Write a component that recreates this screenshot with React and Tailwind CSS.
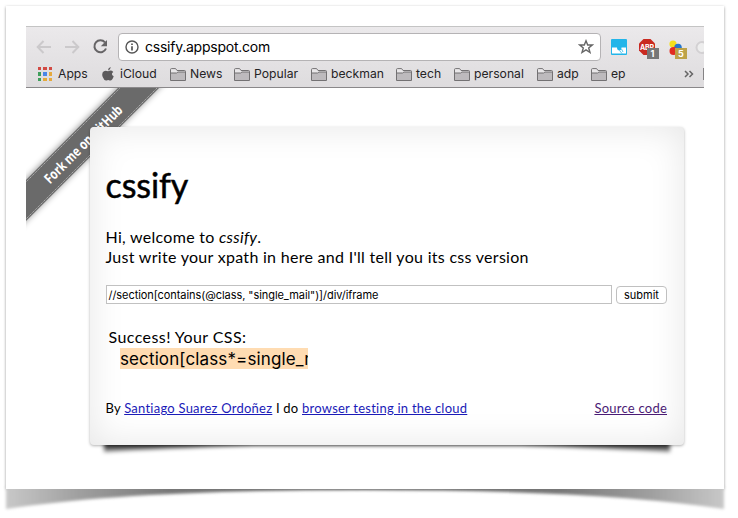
import React from 'react';

const Folder = () => (
  <svg width="16" height="13" viewBox="0 0 16 13" className="mr-[4px] shrink-0">
    <path d="M.5 12.500V1.600Q.5.6 1.500.6H5.600L7 2.500H14.600Q15.500 2.500 15.500 3.500V12.500Z" fill="#e9e7e9" stroke="#737173" />
    <path d="M1 5H7L8.200 4H15V12H1Z" fill="#bdbabd" />
    <path d="M.5 5H6.500L8 4H15.500" fill="none" stroke="#737173" />
  </svg>
);

const folders = [
  { name: 'News', box: 'w-[64px]' },
  { name: 'Popular', box: 'w-[77px]' },
  { name: 'beckman', box: 'w-[85px]' },
  { name: 'tech', box: 'w-[58px]' },
  { name: 'personal', box: 'w-[83px]' },
  { name: 'adp', box: 'w-[54px]' },
  { name: 'ep', box: 'w-[40px]' },
];

const appColors = ['#d24a43', '#d24a43', '#d24a43', '#3f9e5b', '#4a86e8', '#e5a93d', '#3f9e5b', '#e5a93d', '#e5a93d'];

function Toolbar() {
  return (
    <div className="h-[36px] flex items-center pt-[3px]">
      <svg width="82" height="20" viewBox="0 0 82 20" className="ml-[10px] shrink-0" fill="none">
        <path d="M15 10H2M7.500 4L1.700 10L7.500 16" stroke="#cbc9cb" strokeWidth="2" />
        <path d="M29 10H42M36.500 4L42.300 10L36.500 16" stroke="#cbc9cb" strokeWidth="2" />
        <path d="M69 5.400A6 6 0 1 0 70 11.500" stroke="#666466" strokeWidth="2" />
        <path d="M71 3V9.200H64.800Z" fill="#666466" />
      </svg>
      <div className="w-[483px] h-[28px] shrink-0 bg-white border border-[#b5b3b5] rounded-[4px] flex items-center">
        <svg width="14" height="14" viewBox="0 0 14 14" className="ml-[6px] mr-[6px]">
          <circle cx="7" cy="7" r="6" fill="none" stroke="#555" strokeWidth="1.400" />
          <path d="M7 6.200V10.500M7 3.400V5" stroke="#555" strokeWidth="1.700" />
        </svg>
        <span className="text-[14px] leading-[20px] tracking-[-0.24px] text-black whitespace-nowrap">cssify.appspot.com</span>
        <svg width="16" height="16" viewBox="0 0 16 16" className="ml-auto mr-[6px]">
          <path d="M8 1.800L9.700 6H14.200L10.700 8.900L12 13.500L8 10.900L4 13.500L5.300 8.900L1.800 6H6.300Z" fill="none" stroke="#666" strokeWidth="1.400" />
        </svg>
      </div>
      <svg width="103" height="28" viewBox="601 32 103 28" className="shrink-0">
        <rect x="611" y="38" width="16" height="16" rx="1" fill="#22b5e9" />
        <path d="M612 46.500H617Q617 49.500 619.500 49.500Q621.500 49.500 621.500 46.500H626V52.500H612Z" fill="#fff" />
        <path d="M619.500 49.500L622 52.500M621.500 48L623 51" stroke="#22b5e9" strokeWidth=".8" />
        <path d="M643.500 38H650.500L655 42.500V49.500L650.500 54H643.500L639 49.500V42.500Z" fill="#c92a20" />
        <text x="640" y="48.500" fontSize="7" fontWeight="700" fill="#fff" textLength="14">ABP</text>
        <rect x="647" y="47" width="12" height="11" fill="#777" />
        <text x="650.500" y="56" fontSize="9" fontWeight="700" fill="#fff">1</text>
        <circle cx="673" cy="43" r="3.600" fill="#f4df1d" />
        <circle cx="678" cy="46.500" r="3.800" fill="#2577ce" />
        <circle cx="673.500" cy="50" r="4" fill="#e32c22" />
        <rect x="675" y="47" width="12" height="11" fill="#bda349" />
        <text x="678" y="56" fontSize="9" fontWeight="700" fill="#fff">5</text>
        <circle cx="702" cy="46.500" r="5.500" fill="#eeeeee" stroke="#d3d1d3" strokeWidth="2" />
      </svg>
    </div>
  );
}

function Bookmarks() {
  return (
    <div className="h-[24px] flex items-center text-[12.200px] leading-[20px] text-[#252325] pb-[2px]">
      <div className="ml-[12px] w-[64px] shrink-0 flex items-center">
        <div className="grid grid-cols-3 gap-[2px] mr-[6px]">
          {appColors.map((c, i) => (
            <div key={i} className="w-[3.330px] h-[3.330px]" style={{ backgroundColor: c }} />
          ))}
        </div>
        <span>Apps</span>
      </div>
      <div className="w-[68px] shrink-0 flex items-center">
        <svg width="12" height="14" viewBox="0 0 12 14" className="mr-[6px]" fill="#5c5a5c">
          <path d="M8.600.1Q8.800 2.600 6.100 3.400Q5.800 1.100 8.600.1ZM6.100 4.200Q9.300 2.700 11.300 5Q8.300 7.100 11.700 9.300Q9.800 14.500 7.800 13.400Q6.100 12.600 4.700 13.400Q2.400 14.200.7 10Q-.7 5.900 1.900 4.200Q3.500 3.200 6.100 4.200Z" />
        </svg>
        <span>iCloud</span>
      </div>
      {folders.map((f) => (
        <div key={f.name} className={`shrink-0 flex items-center ${f.box}`}>
          <Folder />
          <span>{f.name}</span>
        </div>
      ))}
      <svg width="10" height="8" viewBox="0 0 10 8" className="ml-auto mr-[9px] shrink-0" fill="none" stroke="#666" strokeWidth="1.500">
        <path d="M1 1L4 4L1 7M5.500 1L8.500 4L5.500 7" />
      </svg>
      <div className="w-[1px] h-[12px] bg-[#858385]" />
    </div>
  );
}

function Ribbon() {
  return (
    <svg className="absolute left-0 top-0" width="150" height="150" viewBox="26 88 150 150">
      <defs>
        <filter id="ribbonShadow" x="-20%" y="-20%" width="140%" height="140%">
          <feGaussianBlur stdDeviation="3" />
        </filter>
      </defs>
      <path d="M16 189L128 77H170L16 231Z" fill="#000" opacity=".4" filter="url(#ribbonShadow)" />
      <path d="M16 190L128 78H169L16 231Z" fill="#6a6a6a" />
      <path d="M16 192L128 80M16 229L169 76" stroke="#b4b4b4" strokeWidth=".9" strokeDasharray="1.500 .7" />
      <text x="0" y="0" transform="translate(50 184.500) rotate(-45)" fontFamily="Open Sans, sans-serif" fontSize="14" fontWeight="700" fill="#fff" textLength="104" lengthAdjust="spacingAndGlyphs">Fork me on GitHub</text>
    </svg>
  );
}

function Card() {
  return (
    <div className="relative ml-[64px] mt-[39px] w-[594px] h-[318px]">
      <svg className="absolute left-0 top-[303px]" width="594" height="35" viewBox="90 430 594 35">
        <defs>
          <linearGradient id="liftFade" gradientUnits="userSpaceOnUse" x1="0" x2="0" y1="444" y2="454">
            <stop offset="0" stopColor="#000" stopOpacity=".85" />
            <stop offset="1" stopColor="#000" stopOpacity=".3" />
          </linearGradient>
          <filter id="lift" x="-5%" y="-50%" width="110%" height="200%">
            <feGaussianBlur stdDeviation="2" />
          </filter>
        </defs>
        <path d="M104 436H670V452Q610 448 520 445H255Q160 448 104 452Z" fill="url(#liftFade)" filter="url(#lift)" />
      </svg>
      <div className="relative h-full rounded-[4px] bg-white pl-[15.500px] pr-[17px] text-black shadow-[0_1px_3px_rgba(0,0,0,0.3),inset_0_0_36px_rgba(0,0,0,0.1)] font-['Lato','Open_Sans',sans-serif]">
        <h1 className="pt-[36px] text-[34px] leading-[44px] tracking-[-0.1px] [-webkit-text-stroke:0.5px_black]">cssify</h1>
        <p className="pt-[20px] text-[16px] leading-[20px] whitespace-nowrap tracking-[0.290px]">
          Hi, welcome to <em>cssify</em>.<br />
          Just write your xpath in here and I'll tell you its css version
        </p>
        <div className="mt-[18px] flex items-center justify-between font-['Inter',sans-serif] text-[11px]">
          <div className="w-[506px] h-[19px] border border-[#c1c1c1] bg-white pl-[2px] leading-[18px] tracking-[-0.06px] whitespace-nowrap">//section[contains(@class, "single_mail")]/div/iframe</div>
          <div className="mt-[1px] w-[51px] h-[18px] rounded-[4px] border border-[#c0c0c0] bg-white text-center leading-[17px]">submit</div>
        </div>
        <div className="mt-[22px] pl-[3px] text-[16px] leading-[22px] tracking-[0.420px] whitespace-nowrap">Success! Your CSS:</div>
        <div className="ml-[14.500px] h-[21px] w-[188px] overflow-hidden whitespace-nowrap bg-[#ffdcb2] font-['Inter',sans-serif] text-[17px] leading-[22px] tracking-[0.120px]">section[class*=single_mail]</div>
        <div className="mt-[29px] flex justify-between text-[13px] leading-[20px] tracking-[0.235px] whitespace-nowrap">
          <div>By <span className="text-[#1b1bb8] underline">Santiago Suarez Ordoñez</span> I do <span className="text-[#1b1bb8] underline">browser testing in the cloud</span></div>
          <div className="text-[#4b1b75] underline">Source code</div>
        </div>
      </div>
    </div>
  );
}

export default function App() {
  return (
    <div className="relative w-[738px] h-[518px] bg-white overflow-hidden font-['Inter',sans-serif]">
      <svg className="absolute left-0 top-0" width="738" height="518" viewBox="0 0 738 518">
        <defs>
          <filter id="soft" x="-5%" y="-50%" width="110%" height="200%">
            <feGaussianBlur stdDeviation="1.500" />
          </filter>
          <linearGradient id="curl" gradientUnits="userSpaceOnUse" x1="6" x2="724" y1="0" y2="0">
            <stop offset="0" stopColor="#c8c8c8" />
            <stop offset=".1" stopColor="#a0a0a0" />
            <stop offset=".23" stopColor="#777" />
            <stop offset=".5" stopColor="#666" />
            <stop offset=".77" stopColor="#777" />
            <stop offset=".9" stopColor="#a0a0a0" />
            <stop offset="1" stopColor="#c8c8c8" />
          </linearGradient>
        </defs>
        <rect x="6" y="7" width="718" height="482" fill="#999" filter="url(#soft)" />
        <path d="M6 486H724V509Q600 490 365 490Q130 490 6 509Z" fill="url(#curl)" filter="url(#soft)" />
      </svg>
      <div className="relative ml-[6px] top-[6px] w-[718px] h-[483px] bg-white px-[20px] pt-[20px]">
        <div className="h-[62px] bg-gradient-to-b from-[#ebe9eb] to-[#dedcde] border-t border-t-[#c4c4c4] border-b border-b-[#8a888a] overflow-hidden box-border">
          <Toolbar />
          <Bookmarks />
        </div>
        <div className="relative flex">
          <Ribbon />
          <Card />
        </div>
      </div>
    </div>
  );
}
